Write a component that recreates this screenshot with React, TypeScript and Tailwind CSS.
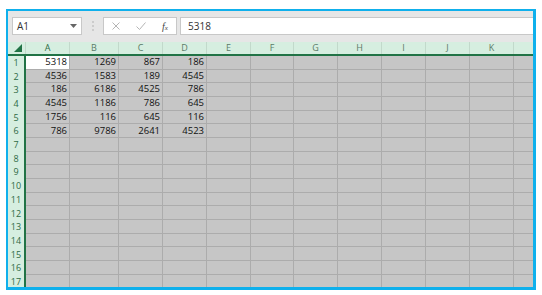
import React from "react";

const cols = [
  { name: "A", w: 44 },
  { name: "B", w: 49 },
  { name: "C", w: 44 },
  { name: "D", w: 44 },
  { name: "E", w: 44 },
  { name: "F", w: 43 },
  { name: "G", w: 44 },
  { name: "H", w: 44 },
  { name: "I", w: 44 },
  { name: "J", w: 44 },
  { name: "K", w: 44 },
  { name: "", w: 30 },
];

const data: (number | null)[][] = [
  [5318, 1269, 867, 186],
  [4536, 1583, 189, 4545],
  [186, 6186, 4525, 786],
  [4545, 1186, 786, 645],
  [1756, 116, 645, 116],
  [786, 9786, 2641, 4523],
];

const font = { fontFamily: '"Open Sans", "Noto Sans", sans-serif' };

function Toolbar() {
  return (
    <div className="flex h-[31px] items-start gap-0 bg-[#e6e6e6] pt-[6px] pl-[4px]">
      <div className="flex h-[18px] w-[70px] items-center justify-between border border-[#c8c8c8] bg-white pl-[4px] pr-[4px] text-[10px] text-[#333]">
        <span>A1</span>
        <svg width="7" height="4" viewBox="0 0 7 4">
          <path d="M0 0h7L3.5 4z" fill="#666" />
        </svg>
      </div>
      <div className="flex w-[21px] justify-center pt-[4px]">
        <svg width="2" height="10" viewBox="0 0 2 10">
          <circle cx="1" cy="1" r="0.8" fill="#aaa" />
          <circle cx="1" cy="5" r="0.8" fill="#aaa" />
          <circle cx="1" cy="9" r="0.8" fill="#aaa" />
        </svg>
      </div>
      <div className="flex h-[18px] w-[74px] items-center border border-[#c8c8c8] bg-white">
        <div className="flex w-[24px] justify-center">
          <svg width="8" height="8" viewBox="0 0 8 8">
            <path d="M0.5 0.5l7 7M7.5 0.5l-7 7" stroke="#b5b5b5" strokeWidth="1" />
          </svg>
        </div>
        <div className="flex w-[26px] justify-center">
          <svg width="10" height="8" viewBox="0 0 10 8">
            <path d="M0.5 4.5l3 3L9.5 0.5" stroke="#b5b5b5" strokeWidth="1" fill="none" />
          </svg>
        </div>
        <div
          className="flex w-[22px] items-baseline justify-center text-[10px] italic text-[#444]"
          style={{ fontFamily: '"Liberation Serif", serif' }}
        >
          <span>f</span>
          <span className="text-[7px]">x</span>
        </div>
      </div>
      <div className="ml-[3px] flex h-[18px] flex-1 items-center border border-r-0 border-[#c8c8c8] bg-white pl-[7px] text-[10px] text-[#333]">
        5318
      </div>
    </div>
  );
}

function HeaderRow() {
  return (
    <div className="flex h-[14px] border-b-2 border-[#217346] bg-[#d6eee0]">
      <div className="relative w-[18px] shrink-0 border-r border-[#c2d9cb]">
        <svg className="absolute right-[3px] bottom-[2px]" width="8" height="8" viewBox="0 0 8 8">
          <path d="M8 0v8H0z" fill="#217346" />
        </svg>
      </div>
      {cols.map((c, i) => (
        <div
          key={i}
          className={`flex shrink-0 items-center justify-center border-r border-[#c2d9cb] text-[9px] ${i === 0 ? "text-[#2e6b45]" : "text-[#5b7b68]"}`}
          style={{ width: c.w }}
        >
          {c.name}
        </div>
      ))}
    </div>
  );
}

function Row({ n }: { n: number }) {
  const vals = data[n - 1] || [];
  return (
    <div className="flex h-[13.7px] shrink-0">
      <div className="flex w-[18px] shrink-0 items-center justify-center border-r-2 border-[#217346] bg-[#d6eee0] text-[9px] text-[#2e6b45]">
        {n}
      </div>
      {cols.map((c, i) => {
        const v = vals[i];
        const sel = n === 1 && i === 0;
        return (
          <div
            key={i}
            className={`flex shrink-0 items-center justify-end border-r border-b border-[#acacac] pr-[2px] text-[9.5px] text-[#111] ${sel ? "bg-white" : "bg-[#c6c6c6]"}`}
            style={{ width: c.w }}
          >
            {v ?? ""}
          </div>
        );
      })}
    </div>
  );
}

export default function App() {
  const rows = Array.from({ length: 17 }, (_, i) => i + 1);
  return (
    <div className="h-[295px] w-[542px] bg-white pt-[9px] pl-[6px]" style={font}>
      <div className="flex h-[281px] w-[530px] flex-col overflow-hidden border-2 border-r-[3px] border-b-[3px] border-[#0fb0ec]">
        <Toolbar />
        <HeaderRow />
        <div className="flex flex-col overflow-hidden">
          {rows.map((n) => (
            <Row key={n} n={n} />
          ))}
        </div>
      </div>
    </div>
  );
}
